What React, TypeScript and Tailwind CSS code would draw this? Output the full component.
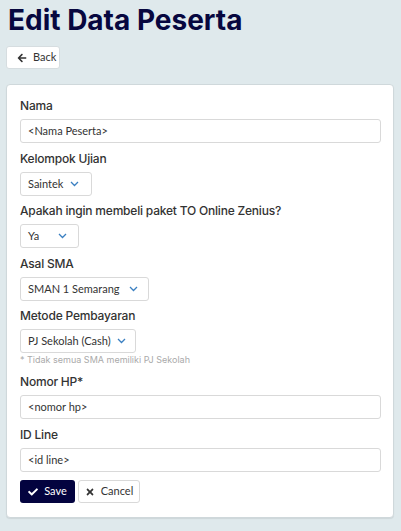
import React from "react";
import { FaArrowLeft, FaCheck, FaTimes } from "react-icons/fa";

const label =
  "block text-[12px] font-medium text-[#333] leading-4 tracking-[-0.2px] [font-family:Inter,sans-serif]";
const box =
  "h-6 border border-[#d9d9d9] rounded-[3px] bg-white text-[11px] text-[#333] pl-[7px] items-center whitespace-nowrap [font-family:Lato,sans-serif]";

const Chevron = () => (
  <svg width="9" height="6" viewBox="0 0 9 6" className="shrink-0">
    <path d="M1 1l3.5 3.5L8 1" fill="none" stroke="#3a7fc1" strokeWidth="1.3" />
  </svg>
);

const Select = ({ value, width, pr = "pr-[11px]" }: { value: string; width: string; pr?: string }) => (
  <div className={`${box} flex justify-between ${width} ${pr}`}>
    <span>{value}</span>
    <Chevron />
  </div>
);

const App = () => {
  return (
    <div className="min-h-[531px] bg-[#dfe9ec] px-[6px] pt-[4px] pb-3">
      <h1 className="pl-[2px] text-[28px] font-bold leading-8 text-[#07073f] [font-family:Inter,sans-serif]">
        Edit Data Peserta
      </h1>
      <button className="mt-[10px] h-[23px] w-[54px] flex items-center gap-[6px] pl-[10px] bg-white border border-[#d6dde0] rounded-[3px] text-[11px] text-[#333] [font-family:Lato,sans-serif]">
        <FaArrowLeft className="text-[10px]" />
        <span>Back</span>
      </button>
      <div className="mt-[15px] w-[388px] bg-white border border-[#cfd8db] rounded-[4px] shadow-[0_1px_1px_rgba(0,0,0,0.08)] pl-[13px] pt-[13px] pb-[14px]">
        <label className={label}>Nama</label>
        <div className={`${box} flex mt-[5px] w-[361px]`}>&lt;Nama Peserta&gt;</div>

        <label className={`${label} mt-[8px]`}>Kelompok Ujian</label>
        <div className="mt-[5px] flex">
          <Select value="Saintek" width="w-[72px]" pr="pr-[12px]" />
        </div>

        <label className={`${label} mt-[7px]`}>Apakah ingin membeli paket TO Online Zenius?</label>
        <div className="mt-[5px] flex">
          <Select value="Ya" width="w-[59px]" />
        </div>

        <label className={`${label} mt-[8px]`}>Asal SMA</label>
        <div className="mt-[5px] flex">
          <Select value="SMAN 1 Semarang" width="w-[129px]" pr="pr-[10px]" />
        </div>

        <label className={`${label} mt-[7px]`}>Metode Pembayaran</label>
        <div className="mt-[5px] flex">
          <Select value="PJ Sekolah (Cash)" width="w-[116px]" pr="pr-[9px]" />
        </div>
        <p className="mt-[1px] text-[9px] leading-3 text-[#aaa] [font-family:Inter,sans-serif]">
          * Tidak semua SMA memiliki PJ Sekolah
        </p>

        <label className={`${label} mt-[8px]`}>Nomor HP*</label>
        <div className={`${box} flex mt-[5px] w-[361px]`}>&lt;nomor hp&gt;</div>

        <label className={`${label} mt-[8px]`}>ID Line</label>
        <div className={`${box} flex mt-[5px] w-[361px]`}>&lt;id line&gt;</div>

        <div className="mt-[8px] flex gap-[3px]">
          <button className="h-[23px] w-[55px] flex items-center justify-center gap-[6px] bg-[#03033f] rounded-[3px] text-white text-[11px] [font-family:Lato,sans-serif]">
            <FaCheck className="text-[10px]" />
            <span>Save</span>
          </button>
          <button className="h-[23px] w-[62px] flex items-center justify-center gap-[6px] bg-white border border-[#d9d9d9] rounded-[3px] text-[#333] text-[11px] [font-family:Lato,sans-serif]">
            <FaTimes className="text-[10px]" />
            <span>Cancel</span>
          </button>
        </div>
      </div>
    </div>
  );
};

export default App;
